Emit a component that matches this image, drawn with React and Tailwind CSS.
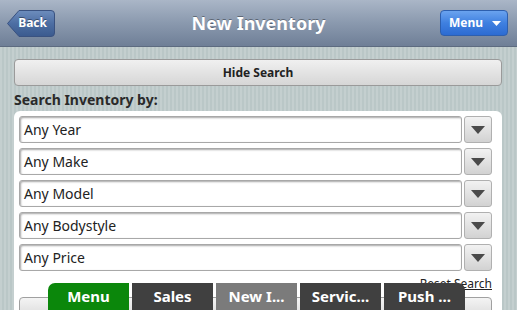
import React from "react";

const stripes =
  "bg-[repeating-linear-gradient(90deg,#c4cfcf_0px,#c4cfcf_2px,#bac7c7_2px,#bac7c7_4px)]";

function Select({ label }) {
  return (
    <div className="flex h-[27px] gap-[2px]">
      <div className="flex-1 flex items-center rounded-[3px] border border-[#a8a8a8] bg-white pl-[4px] text-[14px] text-[#222] shadow-[inset_1px_1px_2px_rgba(0,0,0,0.35)]">
        {label}
      </div>
      <div className="w-[28px] flex items-center justify-center rounded-[3px] border border-[#b0b0b0] bg-[linear-gradient(#f2f2f2,#d2d2d2)]">
        <svg width="14" height="8" viewBox="0 0 14 8">
          <path d="M0 0 L14 0 L7 8 Z" fill="#4a4a4a" />
        </svg>
      </div>
    </div>
  );
}

function Tab({ label, cls }) {
  return (
    <div
      className={`w-[81px] h-[27px] flex items-center justify-center text-white font-bold text-[15px] ${cls}`}
    >
      {label}
    </div>
  );
}

export default function App() {
  return (
    <div className="relative w-[517px] h-[310px] overflow-hidden font-['Noto_Sans',sans-serif]">
      {/* Header */}
      <div className="h-[47px] grid grid-cols-[1fr_auto_1fr] items-center px-[7px] bg-[linear-gradient(#aab6c7,#8a99ae_50%,#6f7f97)] border-b border-[#5d6b80]">
        <div className="relative w-[48px] h-[27px] flex items-center justify-end pr-[8px]">
          <svg className="absolute inset-0" width="48" height="27" viewBox="0 0 48 27">
            <defs>
              <linearGradient id="bk" x1="0" y1="0" x2="0" y2="1">
                <stop offset="0" stopColor="#6d8dbd" />
                <stop offset="0.5" stopColor="#4d6ea3" />
                <stop offset="1" stopColor="#3b5a8e" />
              </linearGradient>
            </defs>
            <path
              d="M0.5 13.5 L12 0.5 L44 0.5 Q47.5 0.5 47.5 4 L47.5 23 Q47.5 26.5 44 26.5 L12 26.5 Z"
              fill="url(#bk)"
              stroke="#3a5280"
            />
          </svg>
          <span className="relative text-white font-bold text-[12px] [text-shadow:0_-1px_0_rgba(0,0,0,0.4)]">
            Back
          </span>
        </div>
        <div className="text-white font-bold text-[18px] [text-shadow:0_-1px_0_rgba(0,0,0,0.35)]">
          New Inventory
        </div>
        <div className="justify-self-end w-[68px] h-[26px] mr-[2px] flex items-center justify-between pl-[8px] pr-[6px] rounded-[4px] border border-[#2d5fae] bg-[linear-gradient(#6aa3ef,#3f80e0_50%,#2c6bd2)]">
          <span className="text-white font-bold text-[12px]">Menu</span>
          <svg width="9" height="5" viewBox="0 0 9 5">
            <path d="M0 0 L9 0 L4.5 5 Z" fill="#fff" />
          </svg>
        </div>
      </div>

      {/* Body */}
      <div className={`h-[263px] ${stripes} pt-[12px] px-[14px] pr-[15px]`}>
        <div className="h-[27px] flex items-center justify-center rounded-[4px] border border-[#9a9a9a] bg-[linear-gradient(#f0f0f0,#d6d6d6)] text-[12px] font-bold text-[#222]">
          Hide Search
        </div>
        <div className="mt-[4px] text-[14px] font-bold text-[#2a2a2a] leading-[20px]">
          Search Inventory by:
        </div>
        <div className="mt-[1px] h-[210px] rounded-t-[6px] bg-white pt-[5px] px-[5px] pr-[10px]">
          <div className="flex flex-col gap-[5px]">
            <Select label="Any Year" />
            <Select label="Any Make" />
            <Select label="Any Model" />
            <Select label="Any Bodystyle" />
            <Select label="Any Price" />
          </div>
          <div className="flex justify-end mt-[5px]">
            <span className="text-[12px] text-[#222] underline leading-[16px]">Reset Search</span>
          </div>
          <div className="mt-[5px] h-[20px] rounded-[4px] border border-[#a0a0a0] bg-[linear-gradient(#f4f4f4,#dcdcdc)]" />
        </div>
      </div>

      {/* Fixed footer tab bar */}
      <div className="absolute left-[48px] bottom-0 flex gap-[3px]">
        <Tab label="Menu" cls="bg-[#0b870b] rounded-tl-[7px]" />
        <Tab label="Sales" cls="bg-[#404040]" />
        <Tab label="New I..." cls="bg-[#7b7b7b]" />
        <Tab label="Servic..." cls="bg-[#404040]" />
        <Tab label="Push ..." cls="bg-[#404040] rounded-tr-[7px]" />
      </div>
    </div>
  );
}
